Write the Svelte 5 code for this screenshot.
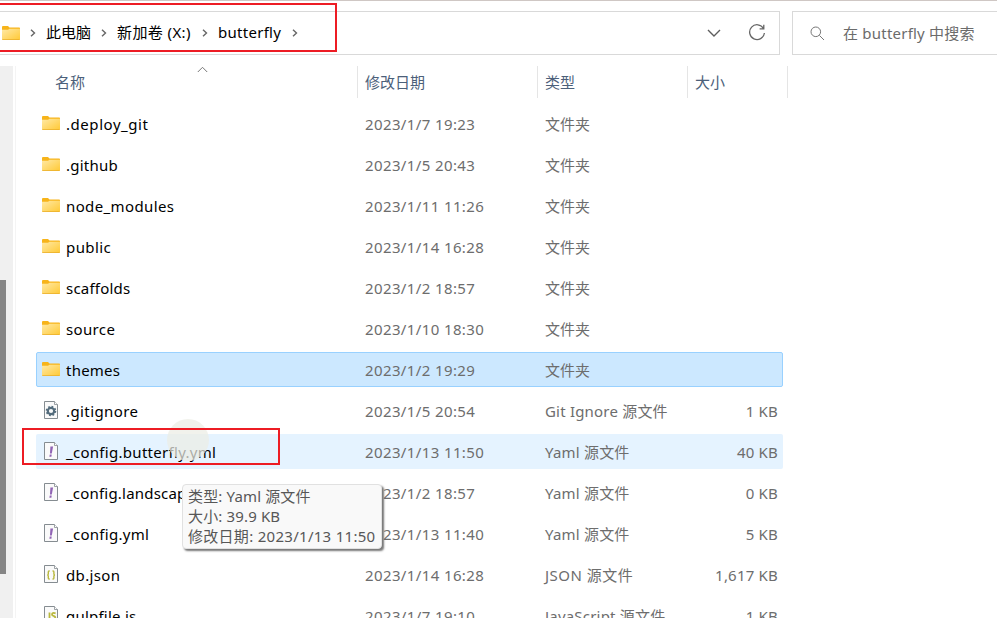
<script>
  const rows = [
    { name: '.deploy_git', date: '2023/1/7 19:23', type: '文件夹', icon: 'folder', track: 0.55 },
    { name: '.github', date: '2023/1/5 20:43', type: '文件夹', icon: 'folder' },
    { name: 'node_modules', date: '2023/1/11 11:26', type: '文件夹', icon: 'folder', track: 0.38 },
    { name: 'public', date: '2023/1/14 16:28', type: '文件夹', icon: 'folder', track: 0.42 },
    { name: 'scaffolds', date: '2023/1/2 18:57', type: '文件夹', icon: 'folder' },
    { name: 'source', date: '2023/1/10 18:30', type: '文件夹', icon: 'folder', track: 0.35 },
    { name: 'themes', date: '2023/1/2 19:29', type: '文件夹', icon: 'folder', state: 'selected' },
    { name: '.gitignore', date: '2023/1/5 20:54', type: 'Git Ignore 源文件', size: '1 KB', icon: 'gear', track: 0.4 },
    { name: '_config.butterfly.yml', date: '2023/1/13 11:50', type: 'Yaml 源文件', size: '40 KB', icon: 'yaml', state: 'hover', track: 0.29 },
    { name: '_config.landscape.yml', date: '2023/1/2 18:57', type: 'Yaml 源文件', size: '0 KB', icon: 'yaml', track: 0.2 },
    { name: '_config.yml', date: '2023/1/13 11:40', type: 'Yaml 源文件', size: '5 KB', icon: 'yaml', track: 0.28 },
    { name: 'db.json', date: '2023/1/14 16:28', type: 'JSON 源文件', size: '1,617 KB', icon: 'json', track: 0.35 },
    { name: 'gulpfile.js', date: '2023/1/7 19:10', type: 'JavaScript 源文件', size: '1 KB', icon: 'js' }
  ];
</script>

{#snippet folder()}
  <svg class="folder" width="18" height="14" viewBox="0 0 18 14">
    <defs>
      <linearGradient id="fold" x1="0" y1="0" x2="1" y2="1">
        <stop offset="0" stop-color="#ffe9a6" /><stop offset="1" stop-color="#ffc935" />
      </linearGradient>
    </defs>
    <path d="M0 1Q0 0 1 0H6L7.5 1.6H17.5L18 2.2V6H0Z" fill="#f7b41a" />
    <path d="M0 3.8H6L7.5 2.7H18V13.2Q18 14 17 14H1Q0 14 0 13.2Z" fill="url(#fold)" />
    <path d="M.3 13.6H17.7" stroke="#e9ac28" stroke-width=".8" />
  </svg>
{/snippet}

{#snippet crumbArrow()}
  <svg class="arrow" width="6" height="8" viewBox="0 0 6 8"><path d="M1 .7L4.5 4L1 7.3" fill="none" stroke="#666" stroke-width="1.4" /></svg>
{/snippet}

{#snippet doc(kind)}
  <svg class="doc" width="15" height="18" viewBox="0 0 15 18">
    <path d="M.5 .5H10.5L13.5 3.5V17.5H.5Z" fill="#fafafa" stroke="#858c91" />
    <path d="M10.5 .5V3.5H13.5" fill="#fff" stroke="#858c91" stroke-width=".8" />
    {#if kind === 'gear'}
      <circle cx="7" cy="10" r="3.2" fill="none" stroke="#536c7c" stroke-width="2.2" />
      <circle cx="7" cy="10" r="4.5" fill="none" stroke="#536c7c" stroke-width="1.6" stroke-dasharray="1.767 1.767" />
    {:else if kind === 'yaml'}
      <path d="M6.4 4.5H9.1L7.8 11.4H6Z" fill="#9063b4" /><path d="M5.8 12.6H7.7L7.4 14.8H5.4Z" fill="#9063b4" />
    {:else if kind === 'json'}
      <path d="M5.7 6H5.1Q4.3 6 4.3 7V9Q4.3 10 3.2 10Q4.3 10 4.3 11V13Q4.3 14 5.1 14H5.7M8.5 6H9.1Q9.9 6 9.9 7V9Q9.9 10 11 10Q9.9 10 9.9 11V13Q9.9 14 9.1 14H8.5" fill="none" stroke="#b9b83d" stroke-width="1.4" />
    {:else}
      <path d="M5.5 6.5V12Q5.5 14 3 13.5M11.6 7.3Q8 6.2 8 8.5Q8 9.6 9.6 10Q11.4 10.4 11.4 12Q11.4 14.3 7.5 13.1" fill="none" stroke="#b9b83d" stroke-width="1.8" />
    {/if}
  </svg>
{/snippet}

<div class="window">
  <div class="toolbar">
    <div class="address">
      {@render folder()}
      <span class="sep">{@render crumbArrow()}</span>
      <span class="crumb pc">此电脑</span>
      <span class="sep">{@render crumbArrow()}</span>
      <span class="crumb drive">新加卷 (X:)</span>
      <span class="sep">{@render crumbArrow()}</span>
      <span class="crumb current">butterfly</span>
      <span class="sep">{@render crumbArrow()}</span>
      <svg class="down" width="14" height="8" viewBox="0 0 14 8"><path d="M1 1L7 7L13 1" fill="none" stroke="#5e5e5e" stroke-width="1.4" /></svg>
      <svg class="refresh" width="18" height="18" viewBox="0 0 18 18"><path d="M15.5 4.5A7.4 7.4 0 1 0 16.4 9M15.8 .8V4.9H11.6" fill="none" stroke="#666" stroke-width="1.3" /></svg>
    </div>
    <div class="search">
      <svg width="15" height="15" viewBox="0 0 15 15"><circle cx="5.8" cy="5.8" r="4.8" fill="none" stroke="#777" /><path d="M9.4 9.4L14 14" stroke="#777" /></svg>
      <span>在 butterfly 中搜索</span>
    </div>
  </div>
  <div class="body">
    <div class="nav"><div class="thumb"></div></div>
    <div class="list">
      <div class="head">
        <div class="h-name">名称<svg class="sort" width="11" height="7" viewBox="0 0 11 7"><path d="M.8 6L5.5 1.3L10.2 6" fill="none" stroke="#777" /></svg></div>
        <div class="h-date">修改日期</div>
        <div class="h-type">类型</div>
        <div class="h-size">大小</div>
      </div>
      {#each rows as row}
        <div class="row {row.state ?? ''}">
          <div class="icon">
            {#if row.icon === 'folder'}{@render folder()}{:else}{@render doc(row.icon)}{/if}
          </div>
          <div class="name" style:letter-spacing="{row.track ?? 0.22}px">{row.name}</div>
          <div class="date">{row.date}</div>
          <div class="type" class:latin={row.icon !== 'folder'} class:wide={row.icon === 'json'}>{row.type}</div>
          <div class="size">{row.size ?? ''}</div>
        </div>
      {/each}
    </div>
  </div>
  <div class="pointer"></div>
  <div class="mark path-mark"></div>
  <div class="mark file-mark"></div>
  <div class="tooltip">
    <div>类型: Yaml 源文件</div>
    <div>大小: 39.9 KB</div>
    <div class="t-date">修改日期: 2023/1/13 11:50</div>
  </div>
</div>

<style>
  .window {
    position: relative; width: 997px; height: 618px; overflow: hidden; box-sizing: border-box;
    background: #fff; border-top: 1px solid #cfc7c4; color: #000;
    font: 15px/20px 'Noto Sans', 'Noto Sans CJK SC', sans-serif; white-space: nowrap;
    font-variant-ligatures: none;
  }
  .window :global(*) { box-sizing: border-box; }
  svg { display: block; flex: none; }
  .toolbar { display: flex; gap: 12px; height: 65px; padding-top: 10px; }
  .address { display: flex; flex: none; align-items: center; width: 780px; height: 44px; padding-left: 2px; border: 1px solid #d9d9d9; border-left: 0; }
  .address .folder { margin-top: -1px; }
  .sep { display: flex; justify-content: center; width: 26px; }
  .crumb { margin-top: -2px; }
  .pc { width: 45px; }
  .drive { width: 75px; letter-spacing: .4px; }
  .current { width: 64px; letter-spacing: .28px; }
  .down { margin-left: auto; }
  .refresh { margin: 0 13px 0 27px; }
  .search { display: flex; flex: none; align-items: center; width: 220px; height: 44px; padding-left: 17px; border: 1px solid #d9d9d9; color: #6b6b6b; }
  .search span { margin: 0 0 0 18px; letter-spacing: .22px; }
  .body { display: flex; height: 552px; }
  .nav { width: 13px; flex: none; background: #f0f0f0; }
  .thumb { width: 6px; height: 294px; margin-top: 214px; background: #858585; }
  .list { width: 790px; margin-left: 2px; border-left: 1px solid #f4f4f4; padding-left: 20px; }
  .head { display: flex; height: 32px; margin-bottom: 8px; line-height: 32px; color: #4c607a; }
  .head > div { border-right: 1px solid #e5e5e5; }
  .h-name { position: relative; width: 322px; padding-left: 19px; }
  .sort { position: absolute; left: 161px; top: 0; }
  .h-date { width: 180px; padding-left: 7px; }
  .h-type { width: 150px; padding-left: 7px; }
  .h-size { width: 100px; padding-left: 7px; }
  .row { display: flex; align-items: center; width: 747px; height: 35px; margin-bottom: 6px; border: 1px solid transparent; border-radius: 2px; color: #6d6d6d; }
  .selected { background: #cce8ff; border-color: #99d1ff; }
  .hover { background: #e5f3ff; }
  .icon { width: 29px; padding-left: 5px; }
  .icon .folder { margin-top: -2px; }
  .icon .doc { margin: -1px 0 0 2px; }
  .name { width: 299px; color: #000; }
  .date { width: 180px; letter-spacing: .38px; }
  .type { width: 143px; }
  .latin { letter-spacing: .2px; }
  .wide { letter-spacing: .48px; }
  .size { width: 90px; text-align: right; letter-spacing: .2px; }
  .mark { position: absolute; border: 2px solid #ed1c24; }
  .path-mark { left: -5px; top: 2px; width: 342px; height: 49px; }
  .file-mark { left: 22px; top: 427px; width: 258px; height: 37px; }
  .pointer { position: absolute; left: 167px; top: 418px; width: 42px; height: 42px; border-radius: 50%; background: rgba(236, 237, 228, .72); }
  .tooltip { position: absolute; left: 182px; top: 483px; width: 200px; height: 65px; padding: 1px 5px; background: #f9f9f9; border: 1px solid #e1e1e1; border-radius: 4px; box-shadow: 2px 2px 2px #777; color: #575757; letter-spacing: .15px; }
  .t-date { letter-spacing: .29px; }
</style>
